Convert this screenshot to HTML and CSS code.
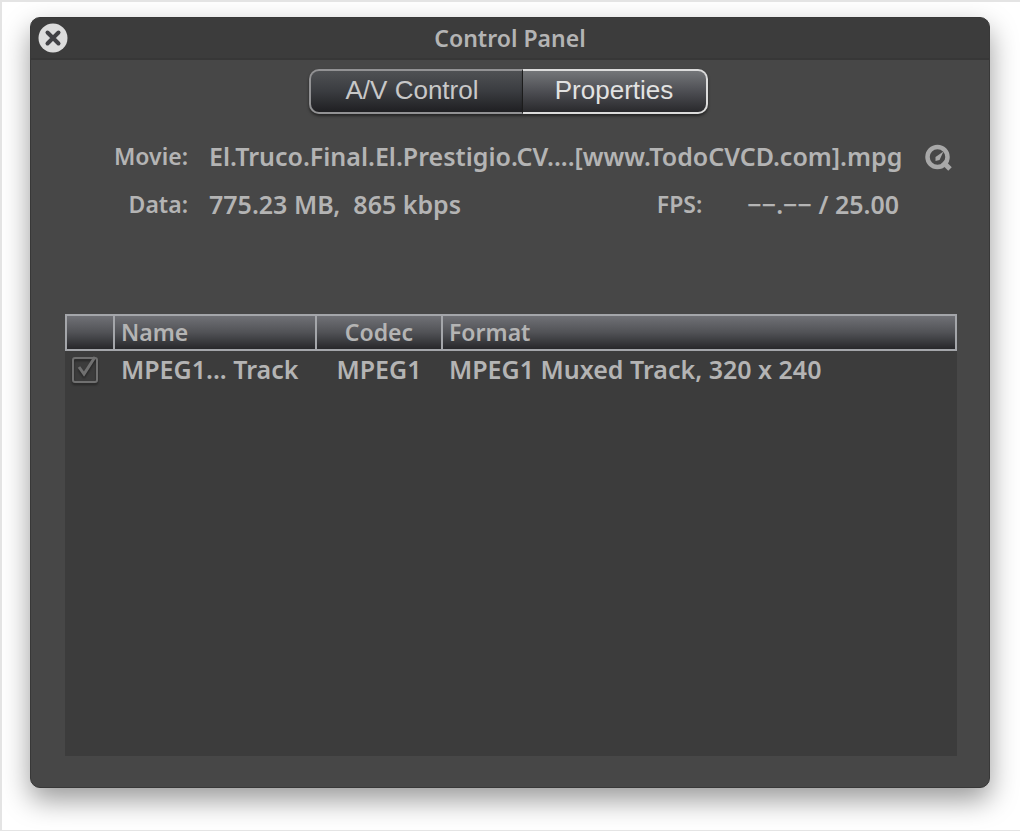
FILE: index.html
```html
<!DOCTYPE html>
<html lang="en">
<head>
    <meta charset="UTF-8">
    <title>Control Panel</title>
    <link rel="stylesheet" href="styles.css">
</head>
<body>
    <div class="panel">
        <div class="titlebar">
            <button class="close" type="button" aria-label="Close">
                <svg width="30" height="30" viewBox="0 0 30 30">
                    <circle cx="15" cy="15" r="14.5" fill="#dcdcdc"/>
                    <path d="M9.500 9.500L20.500 20.500M20.500 9.500L9.500 20.500" stroke="#414145" stroke-width="4" stroke-linecap="round"/>
                </svg>
            </button>
            <h1 class="title">Control Panel</h1>
        </div>
        <div class="tabs">
            <button class="tab" type="button">A/V Control</button>
            <button class="tab selected" type="button">Properties</button>
        </div>
        <div class="info">
            <div class="row">
                <span class="label">Movie:</span>
                <span class="value">El.Truco.Final.El.Prestigio.CV....[www.TodoCVCD.com].mpg</span>
                <svg class="qt" width="27" height="29" viewBox="0 -2 27 29" fill="none" stroke="#a8a8a8">
                    <circle cx="12.500" cy="13" r="10" stroke-width="4.500"/>
                    <path d="M18 18L25 25" stroke-width="5"/>
                    <path d="M10.500 13L18.500 7.500L14.500 16L10.500 17Z" fill="#a8a8a8" stroke="none"/>
                </svg>
            </div>
            <div class="row">
                <span class="label">Data:</span>
                <span class="value">775.23 MB,&nbsp; 865 kbps</span>
                <span class="fps-label">FPS:</span>
                <span class="fps">−−.−− / 25.00</span>
            </div>
        </div>
        <div class="list">
            <table class="tracks">
                <thead>
                    <tr>
                        <th class="col-check"></th>
                        <th class="col-name">Name</th>
                        <th class="col-codec">Codec</th>
                        <th>Format</th>
                    </tr>
                </thead>
                <tbody>
                    <tr>
                        <td class="cell-check">
                            <label class="check">
                                <input type="checkbox" aria-label="MPEG1 Track" checked>
                                <svg width="30" height="30" viewBox="0 0 30 30" fill="none" stroke="#707070">
                                    <rect x="3" y="4" width="24" height="24" rx="2" stroke-width="2"/>
                                    <path d="M9 13L14 20L25 3" stroke-width="3"/>
                                </svg>
                            </label>
                        </td>
                        <td>MPEG1... Track</td>
                        <td class="col-codec">MPEG1</td>
                        <td>MPEG1 Muxed Track, 320 x 240</td>
                    </tr>
                </tbody>
            </table>
        </div>
    </div>
</body>
</html>
```

FILE: styles.css
```css
*{
    margin: 0;
    padding: 0;
    box-sizing: border-box;
}
body{
    min-height: 100vh;
    display: flex;
    padding: 15px 30px 42px 28px;
    border: 1px solid #e4e4e4;
    border-width: 2px 0 1px 2px;
    background: #fff;
    font: 600 23px/32px "Noto Sans", "Open Sans", sans-serif;
    color: #b4b4b4;
}
button{
    border: none;
    background: none;
    cursor: pointer;
}
.panel{
    flex: 1;
    display: flex;
    flex-direction: column;
    background: #474747;
    border: 1px solid #383838;
    border-radius: 10px;
    box-shadow: 0 12px 28px rgba(0,0,0,0.4);
}
.titlebar{
    display: grid;
    grid-template-columns: 44px 1fr 44px;
    align-items: center;
    height: 42px;
    background: #3c3c3c;
    border-bottom: 2px solid #373737;
    border-radius: 9px 9px 0 0;
}
.close{
    height: 30px;
    padding-left: 7px;
    text-align: left;
}
.close svg{
    display: block;
}
.title{
    font-size: 23px;
    font-weight: 600;
    text-align: center;
}
.tabs{
    display: flex;
    justify-content: center;
    margin-top: 9px;
    padding-right: 4px;
}
.tab{
    width: 214px;
    height: 45px;
    padding: 0 8px 2px 0;
    border: 2px solid #929294;
    border-right: 1px solid #222;
    border-radius: 10px 0 0 10px;
    background: linear-gradient(#4f5154, #3a3c40 50%, #1f1f22);
    box-shadow: 0 2px 3px rgba(0,0,0,0.5);
    font: 26px "Liberation Sans", Arial, sans-serif;
    color: #c8c8c8;
}
.tab.selected{
    width: 185px;
    padding-right: 0;
    border: 2px solid #dcdcdc;
    border-left: none;
    border-radius: 0 10px 10px 0;
    background: linear-gradient(#747679, #4d4e53 50%, #29292c);
    color: #e2e2e2;
}
.info{
    padding: 26px 37px 0 0;
}
.row{
    display: flex;
    align-items: center;
    margin-bottom: 16px;
}
.label{
    width: 157px;
    margin-right: 21px;
    text-align: right;
}
.value, .fps{
    font-size: 25px;
    white-space: nowrap;
}
.value{
    flex: 1;
}
.fps{
    margin: 0 53px 0 45px;
}
.list{
    flex: 1;
    margin: 78px 32px 31px 34px;
    background: #3c3c3c;
}
.tracks{
    width: 100%;
    table-layout: fixed;
    border-collapse: collapse;
    text-align: left;
}
.tracks th{
    height: 35px;
    padding: 0 0 2px 6px;
    border: 2px solid #a4a6aa;
    background: linear-gradient(#707176, #515256 50%, #27272a);
    font-weight: 600;
    line-height: 30px;
}
.tracks td{
    height: 36px;
    padding-left: 7px;
    font-size: 25px;
    white-space: nowrap;
}
.tracks .col-check{
    width: 48px;
}
.tracks .col-name{
    width: 202px;
}
.tracks .col-codec{
    width: 126px;
    padding-left: 0;
    text-align: center;
}
.tracks .cell-check{
    padding-left: 4px;
}
.check{
    display: grid;
    width: 30px;
    height: 30px;
}
.check input, .check svg{
    grid-area: 1 / 1;
    width: 30px;
    height: 30px;
}
.check input{
    opacity: 0;
}
.check svg{
    filter: drop-shadow(0 2px 1px rgba(0,0,0,0.4));
    pointer-events: none;
}
```
